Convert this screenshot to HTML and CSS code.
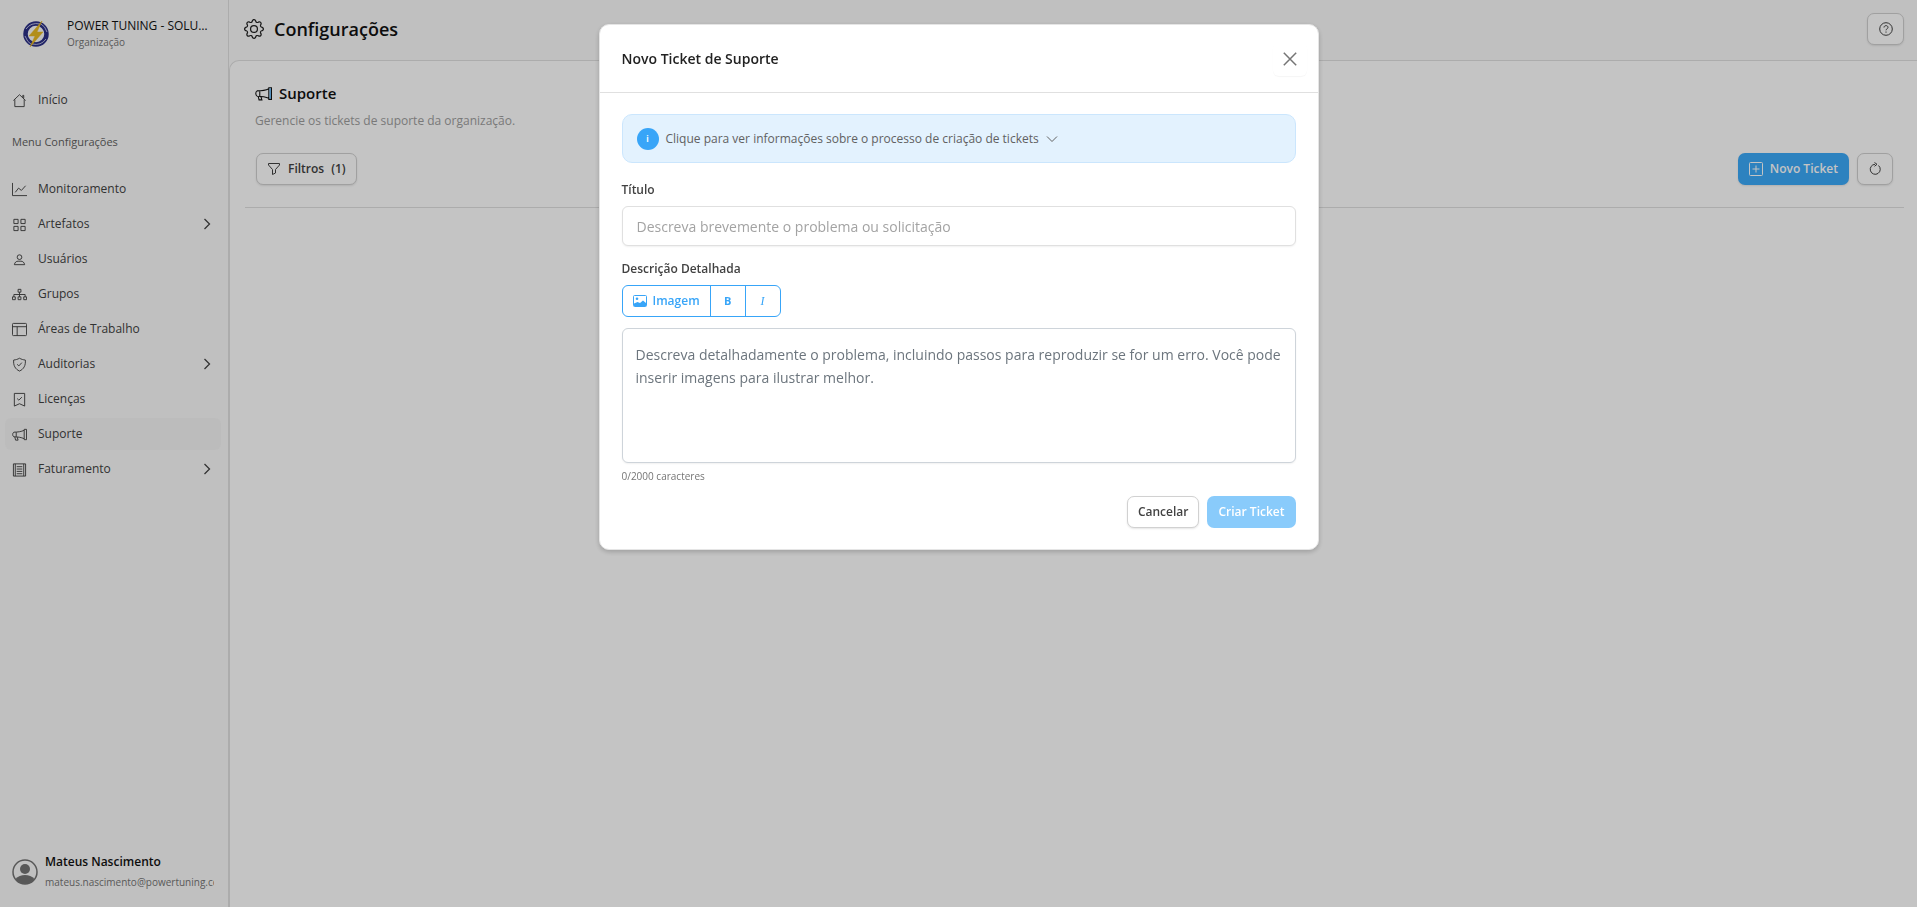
FILE: index.html
```
<!DOCTYPE html>
<html lang="pt-BR">

<head>
    <meta charset="UTF-8">
    <meta name="viewport" content="width=device-width, initial-scale=1.0">
    <link rel="stylesheet" href="styles.css">
    <title>Configurações - Suporte</title>
</head>

<body>

    <div class="app">
        <aside class="sidebar">
            <div class="org">
                <svg class="org-logo" viewBox="0 0 26 26">
                    <circle cx="13" cy="13" r="10.500" fill="none" stroke="#2b2f86" stroke-width="4.500" />
                    <path d="M3 8Q8 1 17 3M23 18Q18 25 9 23M2 15Q4 21 9 24M24 11Q22 5 18 3" fill="none" stroke="#b9bbdc" stroke-width="1" />
                    <path d="M19 0 6 15H12L7 26 20 11H14Z" fill="#e8b923" stroke="#e8b923" stroke-width=".5" />
                </svg>
                <div class="org-text">
                    <div class="org-name">POWER TUNING - SOLUÇÕES</div>
                    <div class="org-type">Organização</div>
                </div>
            </div>

            <nav class="menu">
                <a href="#" class="menu-item">
                    <svg class="icon" viewBox="0 0 16 16"><path d="M1.500 8 8 1.800 14.500 8M3 6.800V14.500H13V6.800M11.500 4.500V2.500H12.500V5.500" /></svg>
                    <span>Início</span>
                </a>
                <h2 class="menu-title">Menu Configurações</h2>
                <a href="#" class="menu-item">
                    <svg class="icon" viewBox="0 0 16 16"><path d="M.5 1V14.500H16M3.500 11 7 6.500 10 9 14.500 4" /></svg>
                    <span>Monitoramento</span>
                </a>
                <a href="#" class="menu-item">
                    <svg class="icon" viewBox="0 0 16 16"><path d="M2 2.500H6.500V7H2ZM9.500 2.500H14V7H9.500ZM2 10H6.500V14.500H2ZM9.500 10H14V14.500H9.500Z" /></svg>
                    <span>Artefatos</span>
                    <svg class="chevron" viewBox="0 0 8 12"><path d="M1.500 1 6.500 6 1.500 11" /></svg>
                </a>
                <a href="#" class="menu-item">
                    <svg class="icon" viewBox="0 0 16 16"><circle cx="8" cy="5.500" r="2.500" /><path d="M2.500 13.500C3 11 4.500 9.800 6.500 9.800H9.500C11.500 9.800 13 11 13.500 13.500Z" /></svg>
                    <span>Usuários</span>
                </a>
                <a href="#" class="menu-item">
                    <svg class="icon" viewBox="0 0 16 16"><path d="M6.500 2.500H9.500V5.500H6.500ZM.5 10.500H3.500V13.500H.5ZM6.500 10.500H9.500V13.500H6.500ZM12.500 10.500H15.500V13.500H12.500ZM8 5.500V10.500M2 10.500V8H14V10.500" /></svg>
                    <span>Grupos</span>
                </a>
                <a href="#" class="menu-item">
                    <svg class="icon" viewBox="0 0 16 16"><rect x=".5" y="1.500" width="15" height="13" rx="1" /><path d="M.5 5H15.500M5.500 5V14.500" /></svg>
                    <span>Áreas de Trabalho</span>
                </a>
                <a href="#" class="menu-item">
                    <svg class="icon" viewBox="0 0 16 16"><path d="M8 1.300C6 2.500 4 3 1.800 3.200C1.200 9 3.500 13 8 15C12.500 13 14.800 9 14.200 3.200C12 3 10 2.500 8 1.300ZM5.500 7.800 7.300 9.500 10.500 6" /></svg>
                    <span>Auditorias</span>
                    <svg class="chevron" viewBox="0 0 8 12"><path d="M1.500 1 6.500 6 1.500 11" /></svg>
                </a>
                <a href="#" class="menu-item">
                    <svg class="icon" viewBox="0 0 16 16"><path d="M2.500 1.500H13.500V15L8 12.500 2.500 15ZM5.500 7 7.300 8.700 10.500 5.500" /></svg>
                    <span>Licenças</span>
                </a>
                <a href="#" class="menu-item active">
                    <svg class="icon" viewBox="0 0 16 16"><path d="M13 2.500H15.500V13.500H13ZM13 3.500C10 5 6 5.500 2 5.500C.3 6.500.3 9.500 2 10.500C6 10.500 10 11 13 12.500M4.500 5.500V10.500M3 10.500 3.800 14H6.500L5.500 10.800" /></svg>
                    <span>Suporte</span>
                </a>
                <a href="#" class="menu-item">
                    <svg class="icon" viewBox="0 0 16 16"><path d="M1.500 2H14.500V15H1.500ZM3.500 2V15M12.500 2V15M5 5H11M5 7.500H11M5 10H11M5 12.500H11" /></svg>
                    <span>Faturamento</span>
                    <svg class="chevron" viewBox="0 0 8 12"><path d="M1.500 1 6.500 6 1.500 11" /></svg>
                </a>
            </nav>

            <div class="user">
                <svg class="avatar" viewBox="0 0 26 26">
                    <circle cx="13" cy="13" r="12" fill="none" stroke="#737373" stroke-width="1.500" />
                    <circle cx="13" cy="10" r="5" fill="#737373" />
                    <path d="M3.500 20C8 14.800 18 14.800 22.500 20C18 26.800 8 26.800 3.500 20Z" fill="#737373" />
                </svg>
                <div class="user-text">
                    <div class="user-name">Mateus Nascimento</div>
                    <div class="user-email">mateus.nascimento@powertuning.com</div>
                </div>
            </div>
        </aside>

        <div class="page">
            <header class="topbar">
                <svg class="gear" viewBox="0 0 16 16">
                    <path d="M8 4.754a3.246 3.246 0 1 0 0 6.492 3.246 3.246 0 0 0 0-6.492M5.754 8a2.246 2.246 0 1 1 4.492 0 2.246 2.246 0 0 1-4.492 0" />
                    <path d="M9.796 1.343c-.527-1.790-3.065-1.790-3.592 0l-.094.319a.873.873 0 0 1-1.255.520l-.292-.160c-1.640-.892-3.433.902-2.540 2.541l.159.292a.873.873 0 0 1-.520 1.255l-.319.094c-1.790.527-1.790 3.065 0 3.592l.319.094a.873.873 0 0 1 .520 1.255l-.160.292c-.892 1.640.901 3.434 2.541 2.540l.292-.159a.873.873 0 0 1 1.255.520l.094.319c.527 1.790 3.065 1.790 3.592 0l.094-.319a.873.873 0 0 1 1.255-.520l.292.160c1.640.893 3.434-.902 2.540-2.541l-.159-.292a.873.873 0 0 1 .520-1.255l.319-.094c1.790-.527 1.790-3.065 0-3.592l-.319-.094a.873.873 0 0 1-.520-1.255l.160-.292c.893-1.640-.902-3.433-2.541-2.540l-.292.159a.873.873 0 0 1-1.255-.520zm-2.633.283c.246-.835 1.428-.835 1.674 0l.094.319a1.873 1.873 0 0 0 2.693 1.115l.291-.160c.764-.415 1.600.420 1.184 1.185l-.159.292a1.873 1.873 0 0 0 1.116 2.692l.318.094c.835.246.835 1.428 0 1.674l-.319.094a1.873 1.873 0 0 0-1.115 2.693l.160.291c.415.764-.420 1.600-1.185 1.184l-.291-.159a1.873 1.873 0 0 0-2.693 1.116l-.094.318c-.246.835-1.428.835-1.674 0l-.094-.319a1.873 1.873 0 0 0-2.692-1.115l-.292.160c-.764.415-1.600-.420-1.184-1.185l.159-.291A1.873 1.873 0 0 0 1.945 8.930l-.319-.094c-.835-.246-.835-1.428 0-1.674l.319-.094A1.873 1.873 0 0 0 3.060 4.377l-.160-.292c-.415-.764.420-1.600 1.185-1.184l.292.159a1.873 1.873 0 0 0 2.692-1.115z" />
                </svg>
                <h1>Configurações</h1>
                <button type="button" class="btn btn-outline btn-help" aria-label="Ajuda">
                    <svg class="icon-sm" viewBox="0 0 14 14"><circle cx="7" cy="7" r="6.300" /><path d="M5 5.500C5 3 9 3 9 5.400C9 6.800 7 6.800 7 8.300M7 9.500V10.700" /></svg>
                </button>
            </header>

            <main class="content">
                <h2 class="content-title">
                    <svg class="icon-title" viewBox="0 0 16 16"><path d="M4.500 5.500V10.500M13 3.500C10 5 6 5.500 2 5.500C.3 6.500.3 9.500 2 10.500C6 10.500 10 11 13 12.500M3 10.500 3.800 14H6.500L5.500 10.800M13 2.500H15.500V13.500H13Z" /><path class="horn" d="M14.300 3V13" /></svg>
                    Suporte
                </h2>
                <p class="content-sub">Gerencie os tickets de suporte da organização.</p>
                <div class="toolbar">
                    <button type="button" class="btn btn-outline">
                        <svg class="icon-sm" viewBox="0 0 14 14"><path d="M1.500 1.500H12.500V3L8.500 7.500V11L5.500 12.500V7.500L1.500 3Z" /></svg>
                        Filtros <span class="count">(1)</span>
                    </button>
                    <div class="toolbar-right">
                        <button type="button" class="btn btn-primary">
                            <svg class="icon-sm" viewBox="0 0 14 14"><rect x=".5" y=".5" width="13" height="13" rx="1" /><path d="M7 3.500V10.500M3.500 7H10.500" /></svg>
                            Novo Ticket
                        </button>
                        <button type="button" class="btn btn-outline btn-refresh" aria-label="Atualizar">
                            <svg class="icon-sm" viewBox="0 0 14 14"><path d="M7 2.300A5 5 0 1 0 10.500 3.500M6.500.5 9 2.300 6.500 4.300" /></svg>
                        </button>
                    </div>
                </div>
            </main>
        </div>
    </div>

    <div class="overlay">
        <div class="modal" role="dialog" aria-modal="true" aria-labelledby="modalTitle">
            <div class="modal-header">
                <h2 id="modalTitle">Novo Ticket de Suporte</h2>
                <button type="button" class="close" aria-label="Fechar">
                    <svg viewBox="0 0 14 14"><path d="M.8.8 13.200 13.200M13.200.8.8 13.200" /></svg>
                </button>
            </div>
            <form class="modal-body">
                <button type="button" class="info">
                    <span class="info-badge">i</span>
                    Clique para ver informações sobre o processo de criação de tickets
                    <svg class="info-arrow" viewBox="0 0 12 12"><path d="M1 3.500 6 8.500 11 3.500" /></svg>
                </button>

                <label for="titulo">Título</label>
                <input type="text" id="titulo" name="titulo" placeholder="Descreva brevemente o problema ou solicitação">

                <label for="descricao">Descrição Detalhada</label>
                <div class="btn-group">
                    <button type="button">
                        <svg viewBox="0 0 14 12"><rect x=".5" y=".5" width="13" height="11" rx="1" fill="none" stroke="currentColor" /><circle cx="4" cy="3.800" r="1.300" /><path d="M1 11V8.500L4.500 7 7 8 10 5.500 13 8V11Z" /></svg>
                        Imagem
                    </button>
                    <button type="button" class="bold" aria-label="Negrito">B</button>
                    <button type="button" class="italic" aria-label="Itálico">I</button>
                </div>
                <textarea id="descricao" name="descricao" placeholder="Descreva detalhadamente o problema, incluindo passos para reproduzir se for um erro. Você pode inserir imagens para ilustrar melhor."></textarea>
                <small class="counter">0/2000 caracteres</small>

                <div class="modal-actions">
                    <button type="button" class="btn btn-outline">Cancelar</button>
                    <button type="submit" class="btn btn-primary" disabled>Criar Ticket</button>
                </div>
            </form>
        </div>
    </div>

</body>

</html>
```

FILE: styles.css
```
* {
    box-sizing: border-box;
}

body {
    margin: 0;
    font-family: 'Segoe UI', 'Open Sans', 'Noto Sans', sans-serif;
    font-size: 12px;
    line-height: 16px;
    color: #424242;
    background-color: #fafafa;
}

h1,
h2,
p {
    margin: 0;
}

button,
input,
textarea {
    font-family: inherit;
    font-size: inherit;
    line-height: inherit;
}

svg {
    flex-shrink: 0;
}

.app {
    display: flex;
    min-height: 100vh;
}

/* sidebar */
.sidebar {
    display: flex;
    flex-direction: column;
    width: 229px;
    flex-shrink: 0;
    border-right: 1px solid #e0e0e0;
}

.org {
    display: flex;
    align-items: center;
    gap: 18px;
    padding: 18px 20px 0 23px;
}

.org-logo {
    width: 26px;
    height: 26px;
}

.org-text,
.user-text {
    min-width: 0;
}

.org-name {
    color: #111;
    overflow: hidden;
    white-space: nowrap;
    text-overflow: ellipsis;
}

.org-type {
    font-size: 10px;
    color: #757575;
}

.menu {
    display: flex;
    flex-direction: column;
    gap: 3px;
    padding: 34px 7px 0 5px;
}

.menu-item {
    display: flex;
    align-items: center;
    gap: 11px;
    height: 32px;
    padding: 0 10px 0 7px;
    border-radius: 6px;
    color: #424242;
    text-decoration: none;
}

.menu-item.active {
    background-color: #f5f5f5;
}

.menu-title {
    padding: 15px 7px 20px;
    font-size: 11px;
    font-weight: 400;
    line-height: 16px;
    color: #616161;
}

.icon,
.icon-sm,
.icon-title,
.chevron,
.info-arrow,
.close svg {
    fill: none;
    stroke: currentColor;
    stroke-width: 1;
}

.icon {
    width: 15px;
    height: 15px;
}

.icon-sm {
    width: 14px;
    height: 14px;
}

.chevron {
    width: 8px;
    height: 12px;
    margin-left: auto;
    stroke-width: 1.3;
}

.user {
    display: flex;
    align-items: center;
    gap: 7px;
    margin-top: auto;
    padding: 0 14px 15px 12px;
}

.avatar {
    width: 26px;
    height: 26px;
}

.user-name {
    font-weight: 600;
    line-height: 20px;
    color: #111;
}

.user-email {
    font-size: 10px;
    line-height: 20px;
    color: #757575;
    overflow: hidden;
    white-space: nowrap;
}

/* page */
.page {
    flex: 1;
    display: flex;
    flex-direction: column;
    min-width: 0;
}

.topbar {
    display: flex;
    align-items: center;
    gap: 10px;
    height: 60px;
    padding: 0 13px 2px 15px;
}

.gear {
    width: 20px;
    height: 20px;
    fill: #222;
}

.topbar h1 {
    font-size: 18px;
    font-weight: 600;
    line-height: 24px;
    color: #111;
}

.content {
    flex: 1;
    padding: 22px 13px 0 15px;
    background-color: #fff;
    border: 1px solid #e0e0e0;
    border-width: 1px 0 0 1px;
    border-radius: 10px 0 0 0;
}

.content-title {
    display: flex;
    align-items: center;
    gap: 7px;
    padding-left: 10px;
    font-size: 15px;
    font-weight: 600;
    line-height: 20px;
    color: #111;
}

.icon-title {
    width: 17px;
    height: 17px;
}

.horn {
    stroke: #38a5f8;
}

.content-sub {
    padding: 10px 10px 0;
    color: #9e9e9e;
}

.toolbar {
    display: flex;
    justify-content: space-between;
    padding: 24px 11px 22px;
    border-bottom: 1px solid #e0e0e0;
}

.toolbar-right {
    display: flex;
    gap: 8px;
}

.btn {
    display: flex;
    align-items: center;
    justify-content: center;
    gap: 7px;
    height: 32px;
    padding: 0 10px;
    border: 1px solid transparent;
    border-radius: 7px;
    font-weight: 600;
    box-shadow: 0 1px 2px rgba(0, 0, 0, 0.1);
    cursor: pointer;
}

.btn-outline {
    background-color: #fff;
    border-color: #d1d1d1;
    color: #424242;
}

.btn-primary {
    background-color: #3ba9f9;
    color: #fff;
}

.btn-primary:disabled {
    opacity: 0.6;
    box-shadow: none;
    cursor: default;
}

.btn-help {
    width: 37px;
    margin-left: auto;
}

.btn-refresh {
    width: 36px;
}

/* modal */
.overlay {
    position: fixed;
    inset: 0;
    padding: 24px;
    background-color: rgba(0, 0, 0, 0.23);
    overflow: auto;
}

.modal {
    max-width: 720px;
    margin: 0 auto;
    background-color: #fff;
    border: 1px solid #e5e5e5;
    border-radius: 10px;
    box-shadow: 0 2px 5px rgba(0, 0, 0, 0.2);
}

.modal-header {
    display: flex;
    align-items: center;
    justify-content: space-between;
    height: 68px;
    padding: 0 11px 0 22px;
    border-bottom: 1px solid #e0e0e0;
}

.modal-header h2 {
    font-size: 14px;
    font-weight: 600;
    line-height: 20px;
    color: #222;
}

.close {
    display: flex;
    align-items: center;
    justify-content: center;
    width: 34px;
    height: 34px;
    padding: 0;
    background: none;
    border: none;
    border-radius: 6px;
    color: #757575;
    box-shadow: 0 1px 1px rgba(0, 0, 0, 0.04);
    cursor: pointer;
}

.close svg {
    width: 14px;
    height: 14px;
    stroke-width: 1.5;
}

.modal-body {
    display: flex;
    flex-direction: column;
    padding: 21px 22px;
}

.info {
    display: flex;
    align-items: center;
    gap: 7px;
    height: 49px;
    margin-bottom: 19px;
    padding: 0 14px;
    background-color: #e3f2fe;
    border: 1px solid #cbe6fd;
    border-radius: 10px;
    color: #616161;
    text-align: left;
    cursor: pointer;
}

.info-badge {
    width: 22px;
    height: 22px;
    border-radius: 50%;
    background-color: #38a5f8;
    color: #fff;
    font-size: 8px;
    font-weight: 700;
    line-height: 22px;
    text-align: center;
}

.info-arrow {
    width: 12px;
    height: 12px;
}

.modal-body label {
    padding-bottom: 8px;
    font-weight: 600;
    color: #424242;
}

.modal-body input,
.modal-body textarea {
    font-size: 14px;
    border-radius: 6px;
    box-shadow: 0 1px 2px rgba(0, 0, 0, 0.06);
}

.modal-body input {
    height: 40px;
    margin-bottom: 15px;
    padding: 0 14px;
    border: 1px solid #e0e0e0;
}

.modal-body input::placeholder {
    color: #a3a3a3;
}

.btn-group {
    display: flex;
    align-self: flex-start;
    height: 32px;
    margin-bottom: 11px;
    border: 1px solid #38a5f8;
    border-radius: 6px;
}

.btn-group button {
    display: flex;
    align-items: center;
    justify-content: center;
    gap: 6px;
    min-width: 35px;
    padding: 0 10px;
    background: none;
    border: none;
    border-left: 1px solid #38a5f8;
    color: #38a5f8;
    font-weight: 600;
    cursor: pointer;
}

.btn-group button:first-child {
    border-left: none;
}

.btn-group svg {
    width: 14px;
    height: 12px;
    fill: currentColor;
}

.btn-group .bold {
    font-size: 11px;
    font-weight: 700;
}

.btn-group .italic {
    font-family: 'Liberation Serif', serif;
    font-style: italic;
    font-weight: 400;
}

.modal-body textarea {
    height: 135px;
    padding: 14px 13px;
    border: 1px solid #ced4da;
    line-height: 23px;
    resize: none;
}

.modal-body textarea::placeholder {
    color: #6c757d;
}

.counter {
    padding-top: 5px;
    font-size: 10px;
    color: #757575;
}

.modal-actions {
    display: flex;
    justify-content: flex-end;
    gap: 8px;
    padding-top: 12px;
}
```
